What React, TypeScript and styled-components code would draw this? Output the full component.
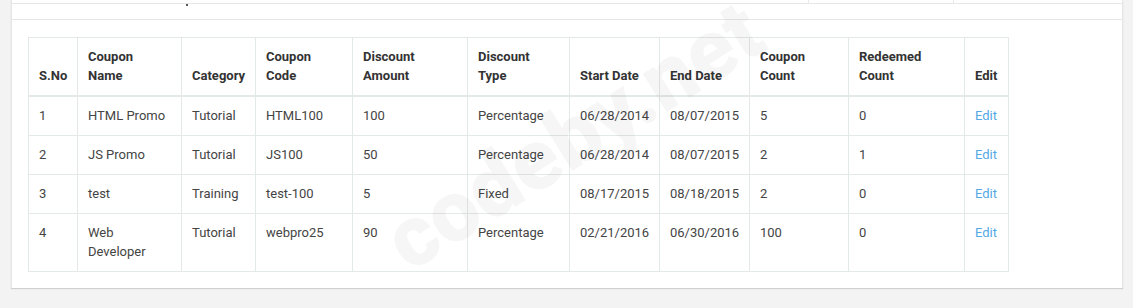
import React from 'react';
import styled, { createGlobalStyle } from 'styled-components';

const GlobalStyle = createGlobalStyle`
    html, body {
        margin: 0;
        padding: 0;
        background: #f3f3f3;
        font-family: Roboto, "Liberation Sans", Arial, sans-serif;
    }
`;

type Coupon = {
    sno: number;
    name: string;
    category: string;
    code: string;
    amount: string;
    type: string;
    start: string;
    end: string;
    count: string;
    redeemed: string;
};

const coupons: Coupon[] = [
    { sno: 1, name: 'HTML Promo', category: 'Tutorial', code: 'HTML100', amount: '100', type: 'Percentage', start: '06/28/2014', end: '08/07/2015', count: '5', redeemed: '0' },
    { sno: 2, name: 'JS Promo', category: 'Tutorial', code: 'JS100', amount: '50', type: 'Percentage', start: '06/28/2014', end: '08/07/2015', count: '2', redeemed: '1' },
    { sno: 3, name: 'test', category: 'Training', code: 'test-100', amount: '5', type: 'Fixed', start: '08/17/2015', end: '08/18/2015', count: '2', redeemed: '0' },
    { sno: 4, name: 'Web Developer', category: 'Tutorial', code: 'webpro25', amount: '90', type: 'Percentage', start: '02/21/2016', end: '06/30/2016', count: '100', redeemed: '0' },
];

const columns: { label: React.ReactNode; width: number }[] = [
    { label: 'S.No', width: 49 },
    { label: <>Coupon<br />Name</>, width: 104 },
    { label: 'Category', width: 74 },
    { label: <>Coupon<br />Code</>, width: 97 },
    { label: <>Discount<br />Amount</>, width: 115 },
    { label: <>Discount<br />Type</>, width: 102 },
    { label: 'Start Date', width: 90 },
    { label: 'End Date', width: 90 },
    { label: <>Coupon<br />Count</>, width: 99 },
    { label: <>Redeemed<br />Count</>, width: 116 },
    { label: 'Edit', width: 44 },
];

const App: React.FC = () => {
    return (
        <StyledPage>
            <GlobalStyle />
            <StyledCard>
                <StyledTopStrip>
                    <StyledTick $left={796} />
                    <StyledTick $left={941} />
                </StyledTopStrip>
                <StyledCardHeader>
                    <StyledDot />
                </StyledCardHeader>
                <StyledCardBody>
                    <StyledTable>
                        <colgroup>
                            {columns.map((c, i) => <col key={i} style={{ width: c.width }} />)}
                        </colgroup>
                        <thead>
                            <tr>
                                {columns.map((c, i) => <StyledTh key={i}>{c.label}</StyledTh>)}
                            </tr>
                        </thead>
                        <tbody>
                            {coupons.map(c => (
                                <tr key={c.sno}>
                                    <StyledTd>{c.sno}</StyledTd>
                                    <StyledTd>{c.name}</StyledTd>
                                    <StyledTd>{c.category}</StyledTd>
                                    <StyledTd>{c.code}</StyledTd>
                                    <StyledTd>{c.amount}</StyledTd>
                                    <StyledTd>{c.type}</StyledTd>
                                    <StyledTd>{c.start}</StyledTd>
                                    <StyledTd>{c.end}</StyledTd>
                                    <StyledTd>{c.count}</StyledTd>
                                    <StyledTd>{c.redeemed}</StyledTd>
                                    <StyledTd><StyledLink href="#">Edit</StyledLink></StyledTd>
                                </tr>
                            ))}
                        </tbody>
                    </StyledTable>
                </StyledCardBody>
                <StyledWatermark>codeby.net</StyledWatermark>
            </StyledCard>
        </StyledPage>
    );
};

export default App;

const StyledPage = styled.div`
    padding: 0 10px 18px 11px;
`;

const StyledCard = styled.div`
    position: relative;
    overflow: hidden;
    background: #fff;
    border-left: 1px solid #e6e6e6;
    border-right: 1px solid #e6e6e6;
    box-shadow: 0 1px 1px rgba(0, 0, 0, 0.14);
`;

const StyledTopStrip = styled.div`
    position: relative;
    height: 3px;
    border-bottom: 1px solid #e6e8e8;
`;

const StyledTick = styled.span<{ $left: number }>`
    position: absolute;
    top: 0;
    left: ${p => p.$left}px;
    width: 1px;
    height: 3px;
    background: #e6e8e8;
`;

const StyledCardHeader = styled.div`
    height: 15px;
    padding-left: 174px;
    border-bottom: 1px solid #e6e8e8;
`;

const StyledDot = styled.span`
    display: block;
    width: 2px;
    height: 2px;
    background: #555;
`;

const StyledCardBody = styled.div`
    padding: 17px 16px 16px;
`;

const StyledTable = styled.table`
    border-collapse: collapse;
    table-layout: fixed;
    width: 981px;
    font-size: 13px;
    line-height: 19px;
    color: #444;
`;

const StyledTh = styled.th`
    text-align: left;
    vertical-align: bottom;
    font-weight: 700;
    color: #333;
    padding: 9px 10px 10px;
    border: 1px solid #e3e8e8;
    border-bottom-width: 2px;
`;

const StyledTd = styled.td`
    vertical-align: top;
    padding: 9px 10px 10px;
    border: 1px solid #e3e8e8;
`;

const StyledLink = styled.a`
    color: #55a8e5;
    text-decoration: none;
`;

const StyledWatermark = styled.div`
    position: absolute;
    left: 562px;
    top: 136px;
    transform: translate(-50%, -50%) rotate(-32deg);
    font-size: 86px;
    font-weight: 900;
    line-height: 1;
    white-space: nowrap;
    color: rgba(0, 0, 0, 0.035);
    pointer-events: none;
`;
